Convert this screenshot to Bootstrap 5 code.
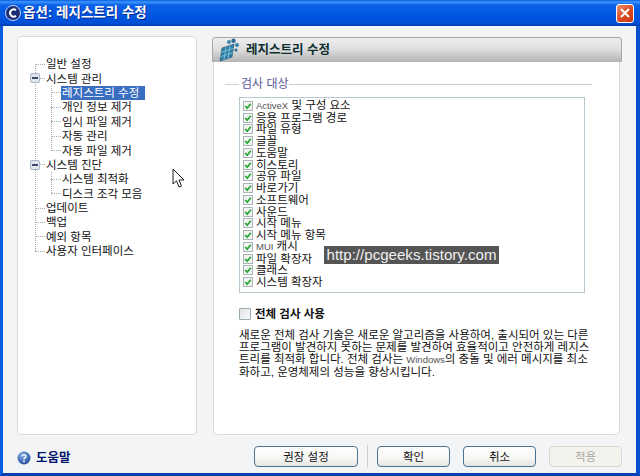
<!DOCTYPE html>
<html lang="ko">
<head>
    <meta charset="UTF-8">
    <meta name="viewport" content="width=device-width, initial-scale=1.0">
    <link href="https://cdn.jsdelivr.net/npm/bootstrap@5.3.1/dist/css/bootstrap.min.css" rel="stylesheet">
    <title>옵션: 레지스트리 수정</title>
    <style>
        html, body { height: 100%; overflow: hidden; }

        body {
            font-family: "Liberation Sans", "Noto Sans CJK KR", sans-serif;
            font-size: 11.5px;
            color: #111;
            background: #f3f4f5;
        }

        .app-window {
            position: relative;
            height: 476px;
            border-left: 3px solid #0a5ce0;
            border-right: 4px solid #0a4fd0;
            border-bottom: 3px solid #0a3fb0;
        }

        .title-bar {
            height: 26px;
            margin: 0 -4px 0 -3px;
            padding: 0 6px 0 5px;
            color: #fff;
            font-size: 13.5px;
            font-weight: 700;
            text-shadow: 1px 1px 0 #0a2a90;
            background: linear-gradient(to bottom, #0a5fe0 0, #3d95ff 2px, #0a62e8 5px, #0055e0 16px, #0050d8 23px, #003db0 26px);
        }

        .title-logo { margin-right: 2px; }

        .close-x {
            width: 18px;
            height: 19px;
            border: 1px solid #fff;
            border-radius: 3px;
            background: linear-gradient(135deg, #f09070, #d9481f 55%, #c83a14);
        }

        .main-area { height: 409px; padding: 10px 16px 0 14px; gap: 15px; }

        .tree-panel {
            width: 180px;
            background: #fff;
            border: 1px solid #d9d9d5;
            border-radius: 5px;
            padding-top: 20px;
        }

        .tree-ul {
            margin: 0;
            padding: 0;
            list-style: none;
            background: repeating-linear-gradient(to bottom, #aaa 0 1px, transparent 1px 2px) 0 0 / 1px calc(100% - 7px) no-repeat;
        }

        .tree-root { margin-left: 17px; background-position: 0 7px; background-size: 1px calc(100% - 14px); }
        .tree-sub { margin-left: 16px; }

        .tree-row { height: 14.4px; line-height: 14px; white-space: nowrap; position: relative; }

        .tree-tick {
            display: block;
            width: 10px;
            margin-right: 1px;
            flex: none;
            border-top: 1px dotted #aaa;
        }

        .tree-box {
            position: absolute;
            left: -5px;
            top: 2px;
            width: 10px;
            height: 10px;
            border: 1px solid #a8b4c4;
            border-radius: 2px;
            background: #e2e6ee;
        }

        .tree-box::after { content: ""; position: absolute; left: 1px; right: 1px; top: 3px; height: 2px; background: #3a4a68; }

        .tree-sel { background: #3a6ec0; color: #fff; padding: 0 6px 0 1px; margin-left: -1px; }

        .content-panel { width: 408px; padding-top: 1px; }

        .panel-head {
            height: 25px;
            flex: none;
            padding-left: 5px;
            gap: 6px;
            margin-right: -2px;
            border: 1px solid #a8a8a8;
            border-bottom: 0;
            border-radius: 4px 4px 0 0;
            font-size: 12.5px;
            font-weight: 700;
            color: #0e3030;
            background: linear-gradient(to bottom, #eeeeee, #dcdcdc 50%, #b4b4b4);
        }

        .panel-body-box {
            flex: 1;
            margin-left: 1px;
            background: #fff;
            border: 1px solid #d9d9d5;
            border-top: 0;
            border-radius: 0 0 5px 5px;
            padding: 15px 0 0 11px;
        }

        .scan-legend { color: #5a5a98; font-size: 12px; line-height: 14px; margin-right: 27px; }
        .scan-line { height: 1px; background: #c4d0d4; }
        .scan-legend .scan-line:first-child { width: 14px; margin-right: 2px; }

        .scan-list {
            width: 346px;
            height: 196px;
            margin: 6px 0 0 14px;
            padding: 2px 0 0 3px;
            border: 1px solid #b8c8d0;
        }

        .scan-item { height: 11.75px; gap: 3px; white-space: nowrap; line-height: 12px; }
        .scan-item svg { flex: none; }
        .latin-sm { font-size: 9.5px; color: #555; }

        .full-check {
            width: 12px;
            height: 12px;
            border: 1px solid #9aa;
            border-radius: 1px;
            background: linear-gradient(135deg, #dfe2e4, #fbfbfb);
        }

        .full-row { margin: 15px 0 0 14px; gap: 4px; font-weight: 700; line-height: 12px; }
        .scan-note { margin: 9px 0 0 14px; line-height: 12px; white-space: nowrap; }

        .foot-bar { height: 38px; padding: 10px 14px 0 14px; }
        .help-link { gap: 5px; font-size: 12.5px; font-weight: 700; color: #00136b; }

        .xp-btn {
            width: 73px;
            height: 21px;
            padding: 0;
            font-size: 11.5px;
            line-height: 18px;
            color: #111;
            border: 1px solid #4a7292;
            border-radius: 4px;
            background: linear-gradient(to bottom, #fff, #f6f6f4 60%, #e4e4e0);
        }

        .xp-btn.wide-btn { width: 104px; }
        .xp-btn:disabled { color: #a8a8a0; opacity: 1; border-color: #d8d8d0; background: #f3f3ee; }
        .foot-sep { width: 1px; height: 23px; background: #cfcfcf; margin: 0 9px; }
        .foot-gap { gap: 13px; }

        .watermark {
            position: absolute;
            left: 321px;
            top: 246px;
            width: 175px;
            height: 18px;
            background: #555;
            color: #f0f0f0;
            font-size: 15.1px;
            line-height: 18px;
            text-align: center;
            white-space: nowrap;
        }

        .mouse-arrow { position: absolute; left: 169px; top: 168px; }
    </style>
</head>
<body>
    <svg width="0" height="0" class="position-absolute">
        <symbol id="tick-box" viewBox="0 0 10 10">
            <rect x=".5" y=".5" width="9" height="9" fill="#f2f4f2" stroke="#a9b4b8"/>
            <path d="M2.2 5 L4.2 7.2 L7.8 2.8" fill="none" stroke="#28a838" stroke-width="1.8"/>
        </symbol>
    </svg>

    <div class="app-window d-flex flex-column">
        <!-- Title -->
        <div class="title-bar d-flex align-items-center">
            <svg width="16" height="16" viewBox="0 0 16 16" class="title-logo flex-shrink-0">
                <circle cx="8" cy="8" r="7.5" fill="#1a2f78" stroke="#c8d4f0"/>
                <path d="M11 5.2 A3.6 3.6 0 1 0 11 10.8" fill="none" stroke="#fff" stroke-width="2"/>
            </svg>
            <span>옵션: 레지스트리 수정</span>
            <div class="close-x ms-auto d-flex align-items-center justify-content-center">
                <svg width="12" height="12" viewBox="0 0 12 12"><path d="M2 2 L10 10 M10 2 L2 10" stroke="#fff" stroke-width="2"/></svg>
            </div>
        </div>

        <div class="main-area d-flex">
            <!-- Tree -->
            <div class="tree-panel">
                <ul class="tree-ul tree-root">
                    <li><div class="tree-row d-flex align-items-center"><i class="tree-tick"></i>일반 설정</div></li>
                    <li>
                        <div class="tree-row d-flex align-items-center"><i class="tree-box"></i><i class="tree-tick"></i>시스템 관리</div>
                        <ul class="tree-ul tree-sub">
                            <li><div class="tree-row d-flex align-items-center"><i class="tree-tick"></i><span class="tree-sel">레지스트리 수정</span></div></li>
                            <li><div class="tree-row d-flex align-items-center"><i class="tree-tick"></i>개인 정보 제거</div></li>
                            <li><div class="tree-row d-flex align-items-center"><i class="tree-tick"></i>임시 파일 제거</div></li>
                            <li><div class="tree-row d-flex align-items-center"><i class="tree-tick"></i>자동 관리</div></li>
                            <li><div class="tree-row d-flex align-items-center"><i class="tree-tick"></i>자동 파일 제거</div></li>
                        </ul>
                    </li>
                    <li>
                        <div class="tree-row d-flex align-items-center"><i class="tree-box"></i><i class="tree-tick"></i>시스템 진단</div>
                        <ul class="tree-ul tree-sub">
                            <li><div class="tree-row d-flex align-items-center"><i class="tree-tick"></i>시스템 최적화</div></li>
                            <li><div class="tree-row d-flex align-items-center"><i class="tree-tick"></i>디스크 조각 모음</div></li>
                        </ul>
                    </li>
                    <li><div class="tree-row d-flex align-items-center"><i class="tree-tick"></i>업데이트</div></li>
                    <li><div class="tree-row d-flex align-items-center"><i class="tree-tick"></i>백업</div></li>
                    <li><div class="tree-row d-flex align-items-center"><i class="tree-tick"></i>예외 항목</div></li>
                    <li><div class="tree-row d-flex align-items-center"><i class="tree-tick"></i>사용자 인터페이스</div></li>
                </ul>
            </div>

            <!-- Content -->
            <div class="content-panel d-flex flex-column">
                <div class="panel-head d-flex align-items-center">
                    <svg width="22" height="24" viewBox="0 0 22 24">
                        <path d="M4 10 L16 6 L14 19 L2 23 Z" fill="#2f80a6" stroke="#174f70" stroke-width=".6"/>
                        <path d="M8 8.7 L6 21.7 M12 7.3 L10 20.3 M3.3 14.3 L15.3 10.3 M2.7 18.7 L14.7 14.7" stroke="#86c8dc" stroke-width=".8"/>
                        <circle cx="11" cy="4" r="2" fill="#3d85aa"/>
                        <circle cx="15.5" cy="2.8" r="2.2" fill="#2c6f95"/>
                        <circle cx="19" cy="7" r="2" fill="#3d85aa"/>
                        <circle cx="18" cy="12" r="1.6" fill="#2c6f95"/>
                    </svg>
                    <span>레지스트리 수정</span>
                </div>
                <div class="panel-body-box">
                    <div class="scan-legend d-flex align-items-center">
                        <div class="scan-line"></div>
                        <span>검사 대상</span>
                        <div class="scan-line flex-grow-1"></div>
                    </div>
                    <div class="scan-list">
                        <div class="scan-item d-flex align-items-center"><svg width="10" height="10"><use href="#tick-box"/></svg><span><span class="latin-sm">ActiveX</span> 및 구성 요소</span></div>
                        <div class="scan-item d-flex align-items-center"><svg width="10" height="10"><use href="#tick-box"/></svg>응용 프로그램 경로</div>
                        <div class="scan-item d-flex align-items-center"><svg width="10" height="10"><use href="#tick-box"/></svg>파일 유형</div>
                        <div class="scan-item d-flex align-items-center"><svg width="10" height="10"><use href="#tick-box"/></svg>글꼴</div>
                        <div class="scan-item d-flex align-items-center"><svg width="10" height="10"><use href="#tick-box"/></svg>도움말</div>
                        <div class="scan-item d-flex align-items-center"><svg width="10" height="10"><use href="#tick-box"/></svg>히스토리</div>
                        <div class="scan-item d-flex align-items-center"><svg width="10" height="10"><use href="#tick-box"/></svg>공유 파일</div>
                        <div class="scan-item d-flex align-items-center"><svg width="10" height="10"><use href="#tick-box"/></svg>바로가기</div>
                        <div class="scan-item d-flex align-items-center"><svg width="10" height="10"><use href="#tick-box"/></svg>소프트웨어</div>
                        <div class="scan-item d-flex align-items-center"><svg width="10" height="10"><use href="#tick-box"/></svg>사운드</div>
                        <div class="scan-item d-flex align-items-center"><svg width="10" height="10"><use href="#tick-box"/></svg>시작 메뉴</div>
                        <div class="scan-item d-flex align-items-center"><svg width="10" height="10"><use href="#tick-box"/></svg>시작 메뉴 항목</div>
                        <div class="scan-item d-flex align-items-center"><svg width="10" height="10"><use href="#tick-box"/></svg><span><span class="latin-sm">MUI</span> 캐시</span></div>
                        <div class="scan-item d-flex align-items-center"><svg width="10" height="10"><use href="#tick-box"/></svg>파일 확장자</div>
                        <div class="scan-item d-flex align-items-center"><svg width="10" height="10"><use href="#tick-box"/></svg>클래스</div>
                        <div class="scan-item d-flex align-items-center"><svg width="10" height="10"><use href="#tick-box"/></svg>시스템 확장자</div>
                    </div>
                    <div class="full-row d-flex align-items-center"><div class="full-check"></div><span>전체 검사 사용</span></div>
                    <p class="scan-note">새로운 전체 검사 기술은 새로운 알고리즘을 사용하여, 출시되어 있는 다른<br>프로그램이 발견하지 못하는 문제를 발견하여 효율적이고 안전하게 레지스<br>트리를 최적화 합니다. 전체 검사는 <span class="latin-sm">Windows</span>의 충돌 및 에러 메시지를 최소<br>화하고, 운영체제의 성능을 향상시킵니다.</p>
                </div>
            </div>
        </div>

        <!-- Footer -->
        <div class="foot-bar d-flex align-items-start">
            <div class="help-link d-flex align-items-center pt-1">
                <svg width="14" height="14" viewBox="0 0 14 14">
                    <defs><radialGradient id="helpFill" cx=".4" cy=".3" r=".8"><stop offset="0" stop-color="#8ab4e8"/><stop offset="1" stop-color="#153f90"/></radialGradient></defs>
                    <circle cx="7" cy="7" r="6.5" fill="url(#helpFill)"/>
                    <path d="M5 5.2 C5.2 3.4 9 3.4 9 5.4 C9 6.8 7 6.8 7 8.4" fill="none" stroke="#fff" stroke-width="1.4"/>
                    <circle cx="7" cy="10.4" r=".9" fill="#fff"/>
                </svg>
                <span>도움말</span>
            </div>
            <div class="ms-auto d-flex align-items-center">
                <button type="button" class="btn xp-btn wide-btn">권장 설정</button>
                <div class="foot-sep"></div>
                <div class="d-flex foot-gap">
                    <button type="button" class="btn xp-btn">확인</button>
                    <button type="button" class="btn xp-btn">취소</button>
                    <button type="button" class="btn xp-btn" disabled>적용</button>
                </div>
            </div>
        </div>

        <div class="watermark">http://pcgeeks.tistory.com</div>
        <svg class="mouse-arrow" width="14" height="22" viewBox="0 0 14 22">
            <path d="M1 1 L1 16 L4.5 12.8 L7 19 L9.5 18 L7 12 L12 12 Z" fill="#fff" stroke="#222"/>
        </svg>
    </div>

    <script src="https://cdn.jsdelivr.net/npm/bootstrap@5.3.1/dist/js/bootstrap.bundle.min.js"></script>
</body>
</html>
